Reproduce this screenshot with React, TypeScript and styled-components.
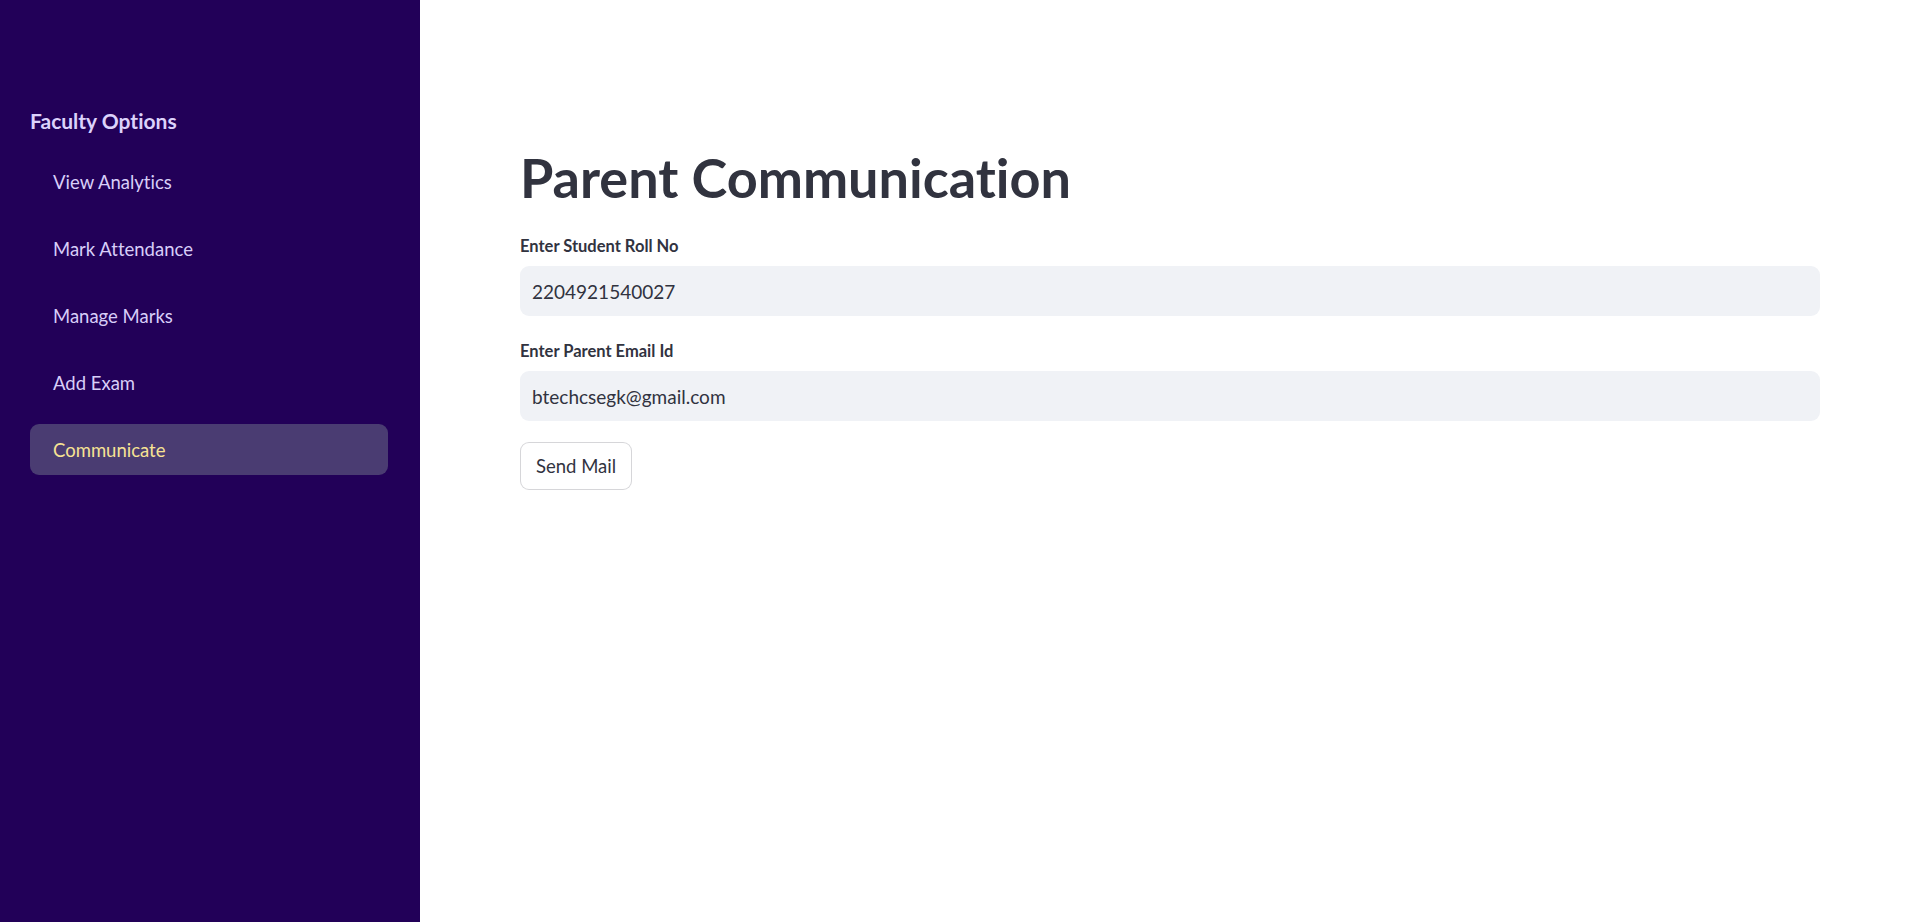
import React from "react";
import styled, { createGlobalStyle } from "styled-components";

const GlobalStyle = createGlobalStyle`
  html, body, #root {
    margin: 0;
    padding: 0;
    height: 100%;
  }
  body {
    font-family: Lato, "Noto Sans", sans-serif;
    font-variant-ligatures: none;
    background: #ffffff;
  }
  * { box-sizing: border-box; }
`;

const Page = styled.div`
  display: flex;
  min-height: 100vh;
`;

const Sidebar = styled.aside`
  width: 420px;
  flex-shrink: 0;
  background: #220058;
  padding: 108px 32px 0 30px;
  display: flex;
  flex-direction: column;
`;

const SidebarTitle = styled.h2`
  margin: 0;
  font-size: 21px;
  line-height: 1.2;
  font-weight: 700;
  color: #dcd2fb;
`;

const NavList = styled.nav`
  margin-top: 23px;
  display: flex;
  flex-direction: column;
  gap: 16px;
`;

const NavItem = styled.div<{ $active?: boolean }>`
  height: 51px;
  display: flex;
  align-items: center;
  padding-left: 23px;
  border-radius: 9px;
  font-size: 18.5px;
  color: ${(p) => (p.$active ? "#f7e394" : "#d8cef8")};
  background: ${(p) => (p.$active ? "#4a3c72" : "transparent")};
  cursor: pointer;
`;

const Main = styled.main`
  flex: 1;
  padding: 146px 100px 0 100px;
`;

const Title = styled.h1`
  margin: 0;
  font-size: 54px;
  line-height: 63px;
  font-weight: 700;
  color: #31333f;
  font-variant-ligatures: none;
`;

const Form = styled.div`
  margin-top: 27px;
  display: flex;
  flex-direction: column;
`;

const Field = styled.div`
  display: flex;
  flex-direction: column;
  margin-bottom: 25px;

  &:last-of-type {
    margin-bottom: 21px;
  }
`;

const Label = styled.label`
  font-size: 16.5px;
  line-height: 20px;
  font-weight: 700;
  color: #31333f;
  margin-bottom: 10px;
`;

const Input = styled.input`
  width: 100%;
  height: 50px;
  border: none;
  outline: none;
  border-radius: 9px;
  background: #f0f2f6;
  padding: 0 12px;
  font-family: Lato, "Noto Sans", sans-serif;
  font-variant-ligatures: none;
  font-size: 19px;
  color: #31333f;
`;

const Button = styled.button`
  align-self: flex-start;
  height: 48px;
  padding: 0 15px;
  background: #ffffff;
  border: 1px solid rgba(49, 51, 63, 0.2);
  border-radius: 9px;
  font-family: Lato, "Noto Sans", sans-serif;
  font-size: 18.5px;
  color: #31333f;
  cursor: pointer;
`;

const navItems = [
  "View Analytics",
  "Mark Attendance",
  "Manage Marks",
  "Add Exam",
  "Communicate",
];

export default function App() {
  return (
    <>
      <GlobalStyle />
      <Page>
        <Sidebar>
          <SidebarTitle>Faculty Options</SidebarTitle>
          <NavList>
            {navItems.map((item) => (
              <NavItem key={item} $active={item === "Communicate"}>
                {item}
              </NavItem>
            ))}
          </NavList>
        </Sidebar>
        <Main>
          <Title>Parent Communication</Title>
          <Form>
            <Field>
              <Label>Enter Student Roll No</Label>
              <Input readOnly value="2204921540027" />
            </Field>
            <Field>
              <Label>Enter Parent Email Id</Label>
              <Input readOnly value="btechcsegk@gmail.com" />
            </Field>
            <Button>Send Mail</Button>
          </Form>
        </Main>
      </Page>
    </>
  );
}
